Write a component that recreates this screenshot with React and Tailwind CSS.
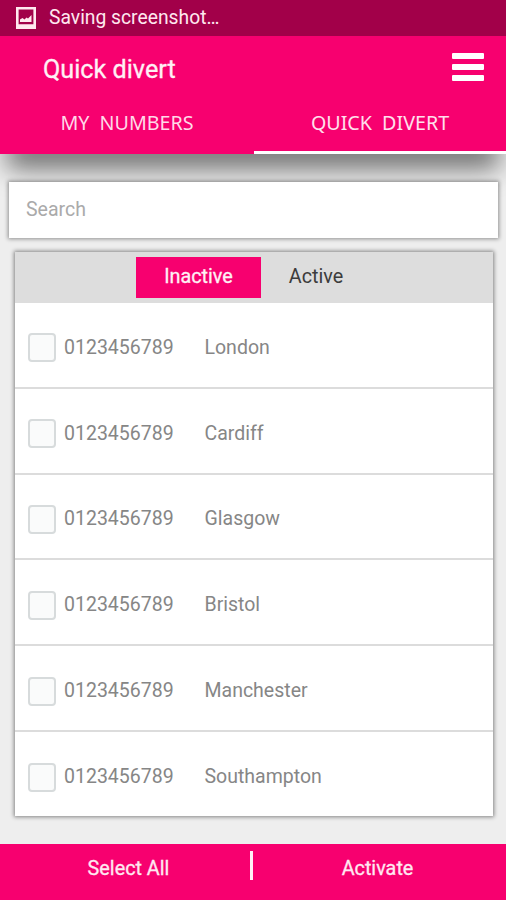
import React, { useState } from "react";

const NUMBERS = [
  { id: 1, number: "0123456789", city: "London" },
  { id: 2, number: "0123456789", city: "Cardiff" },
  { id: 3, number: "0123456789", city: "Glasgow" },
  { id: 4, number: "0123456789", city: "Bristol" },
  { id: 5, number: "0123456789", city: "Manchester" },
  { id: 6, number: "0123456789", city: "Southampton" },
];

function StatusBar() {
  return (
    <div className="h-[36px] bg-[#a20049] flex items-center pl-4 pb-[1px] gap-[13px] text-[#ffe8ef]">
      <svg className="w-5 h-[22px]" viewBox="0 0 20 22">
        <path
          fill="currentColor"
          fillRule="evenodd"
          d="M0 0H20V22H0ZM2.6 2.6V17.2H17.4V2.6ZM4 15V12.5L6.5 11L8.5 12.5L10.5 10.5L12 11.5L15.5 8V15Z"
        />
      </svg>
      <span className="text-[19.3px] leading-6">Saving screenshot…</span>
    </div>
  );
}

function Header() {
  return (
    <header className="relative z-10 h-[118px] bg-[#f7006f] text-white flex flex-col">
      <div className="flex justify-between pl-[43px] pr-[22px] h-[61px]">
        <h1 className="text-[25.2px] leading-8 mt-[18px] text-[#fff0f5] [-webkit-text-stroke:0.3px]">Quick divert</h1>
        <button type="button" className="flex flex-col gap-[5px] mt-[17px] h-[28px] w-8">
          <span className="h-[6px] w-full rounded-[1px] bg-white" />
          <span className="h-[6px] w-full rounded-[1px] bg-white" />
          <span className="h-[6px] w-full rounded-[1px] bg-white" />
        </button>
      </div>
      <nav className="flex-1 flex font-['Noto_Sans',sans-serif] text-[19.7px] leading-[27px] text-[#ffd9e8]">
        <button type="button" className="w-[254px] pt-[12px] flex items-start justify-center [word-spacing:5px]">
          MY NUMBERS
        </button>
        <button
          type="button"
          className="flex-1 pt-[12px] flex items-start justify-center border-b-[3px] border-white text-[#ffe0ec] [word-spacing:5px]"
        >
          QUICK DIVERT
        </button>
      </nav>
    </header>
  );
}

function NumberRow({ item }) {
  return (
    <li className="flex-1 flex items-center border-b-2 border-[#dcdcdc] last:border-b-0 pl-[13px] pt-[6px] text-[19.5px] text-[#868686]">
      <span className="w-7 h-[29px] rounded-[4px] border-2 border-[#d7dbdc] bg-[#fafbfb]" />
      <span className="w-[148.5px] pl-2 pb-[1px]">{item.number}</span>
      <span className="pb-[1px]">{item.city}</span>
    </li>
  );
}

export default function App() {
  const [filter, setFilter] = useState("inactive");

  return (
    <div className="w-[506px] h-[900px] overflow-hidden bg-[#eeeeee] flex flex-col font-[Roboto,sans-serif]">
      <StatusBar />
      <Header />

      <main className="relative flex-1 flex flex-col pt-[28px]">
        {/* Shadow cast by the header */}
        <div className="absolute top-[-20px] left-[12px] right-[12px] h-[20px] shadow-[0_9px_26px_5px_rgba(0,0,0,0.56)]" />

        <div className="relative ml-[9px] mr-[8px] h-[56px] bg-white shadow-[0_0_4px_1px_rgba(0,0,0,0.4)] flex items-center">
          <input
            type="text"
            placeholder="Search"
            className="w-full pl-[17px] text-[19.5px] text-[#868686] placeholder:text-[#aaaaaa] outline-none"
          />
        </div>

        <section className="relative ml-[15px] mr-[13px] mt-[14px] h-[564px] bg-white shadow-[0_0_4px_1px_rgba(0,0,0,0.45)] flex flex-col">
          <div className="h-[51px] bg-[#dddddd] flex justify-center items-center pr-[1px] text-[19.8px]">
            <button
              type="button"
              onClick={() => setFilter("inactive")}
              className={
                filter === "inactive"
                  ? "w-[125px] h-[41px] pb-[1px] bg-[#f7006f] text-[#fff0f5] [-webkit-text-stroke:0.3px]"
                  : "w-[125px] h-[41px] pb-[1px] text-[#3c3c3c]"
              }
            >
              Inactive
            </button>
            <button
              type="button"
              onClick={() => setFilter("active")}
              className={
                filter === "active"
                  ? "w-[110px] h-[41px] pb-[1px] bg-[#f7006f] text-[#fff0f5] [-webkit-text-stroke:0.3px]"
                  : "w-[110px] h-[41px] pb-[1px] text-[#3c3c3c]"
              }
            >
              Active
            </button>
          </div>
          <ul className="flex-1 flex flex-col">
            {NUMBERS.map((item) => (
              <NumberRow key={item.id} item={item} />
            ))}
          </ul>
        </section>
      </main>

      <footer className="relative h-[56px] bg-[#f7006f] flex items-start pt-[7px] text-[19.8px] leading-[36px] text-[#ffe8f1] [-webkit-text-stroke:0.3px]">
        <button type="button" className="w-[250px] pl-[7px]">
          Select All
        </button>
        <span className="w-[3px] h-[29px] bg-[#fff0f6]" />
        <button type="button" className="flex-1 pr-[4px]">
          Activate
        </button>
      </footer>
    </div>
  );
}
